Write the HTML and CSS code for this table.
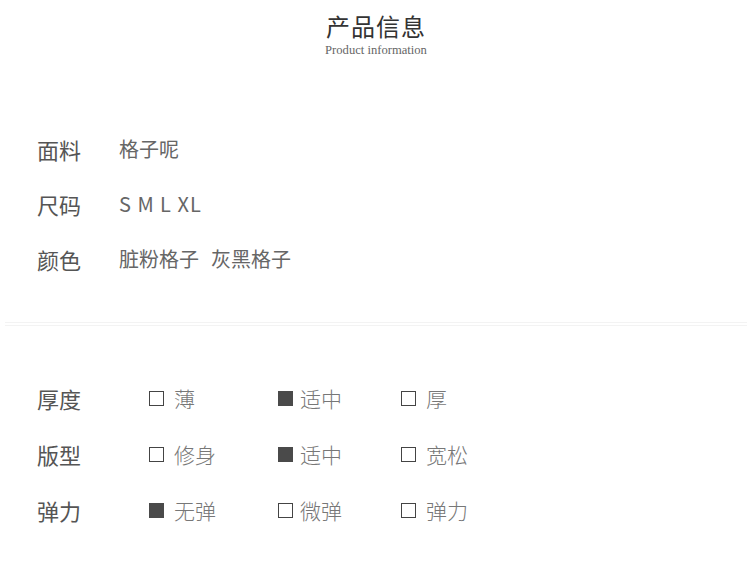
FILE: index.html
```html
<!DOCTYPE html>
<html lang="zh-CN">
<head>
    <meta charset="UTF-8">
    <meta name="viewport" content="width=device-width, initial-scale=1.0">
    <title>产品信息</title>
    <link rel="stylesheet" href="styles.css">
</head>
<body>
    <div class="header">
        <h1>产品信息</h1>
        <p class="sub">Product information</p>
    </div>

    <div class="info">
        <div class="row">
            <span class="label">面料</span>
            <span class="value">格子呢</span>
        </div>
        <div class="row">
            <span class="label">尺码</span>
            <span class="value sizes">S M L XL</span>
        </div>
        <div class="row">
            <span class="label">颜色</span>
            <span class="value">脏粉格子</span>
            <span class="value second">灰黑格子</span>
        </div>
    </div>

    <div class="divider"></div>

    <!-- 厚度 / 版型 / 弹力 -->
    <div class="spec">
        <div class="row">
            <span class="label">厚度</span>
            <span class="opt"><i class="box"></i>薄</span>
            <span class="opt tight"><i class="box on"></i>适中</span>
            <span class="opt"><i class="box"></i>厚</span>
        </div>
        <div class="row">
            <span class="label">版型</span>
            <span class="opt"><i class="box"></i>修身</span>
            <span class="opt tight"><i class="box on"></i>适中</span>
            <span class="opt"><i class="box"></i>宽松</span>
        </div>
        <div class="row">
            <span class="label">弹力</span>
            <span class="opt"><i class="box on"></i>无弹</span>
            <span class="opt tight"><i class="box"></i>微弹</span>
            <span class="opt"><i class="box"></i>弹力</span>
        </div>
    </div>
</body>
</html>
```

FILE: styles.css
```css
body {
    font-family: "Noto Sans CJK SC", "Noto Sans", sans-serif;
    background-color: #fff;
    margin: 0;
    color: #555;
}

.header {
    padding-top: 10px;
    text-align: center;
}

h1 {
    margin: 0;
    font-size: 24px;
    line-height: 32px;
    font-weight: normal;
    letter-spacing: 1px;
    color: #333;
}

.sub {
    margin: 0;
    font-family: "Liberation Serif", serif;
    font-size: 12.6px;
    line-height: 16px;
    color: #666;
}

.info {
    padding: 63px 0 0 37px;
}

.row {
    display: flex;
    align-items: center;
}

.info .row {
    height: 55px;
}

.label {
    width: 82px;
    font-size: 22px;
    color: #555;
}

.value {
    font-size: 20px;
    color: #666;
}

.value.second {
    margin-left: 12px;
}

.sizes {
    letter-spacing: 1px;
}

.divider {
    margin: 36px 5px 0;
    height: 2px;
    border-top: 1px solid #f3f3f3;
    border-bottom: 1px solid #f3f3f3;
}

.spec {
    padding: 44px 0 0 37px;
}

.spec .row {
    height: 56px;
}

.spec .label {
    width: 112px;
}

.opt {
    display: flex;
    align-items: center;
    gap: 10px;
    width: 129px;
    font-size: 21px;
    font-weight: 300;
    color: #777;
}

.opt.tight {
    width: 123px;
    gap: 7px;
}

.box {
    display: inline-block;
    width: 15px;
    height: 15px;
    box-sizing: border-box;
    border: 1.5px solid #444;
}

.box.on {
    background-color: #4a4a4a;
    border-color: #4a4a4a;
}
```
